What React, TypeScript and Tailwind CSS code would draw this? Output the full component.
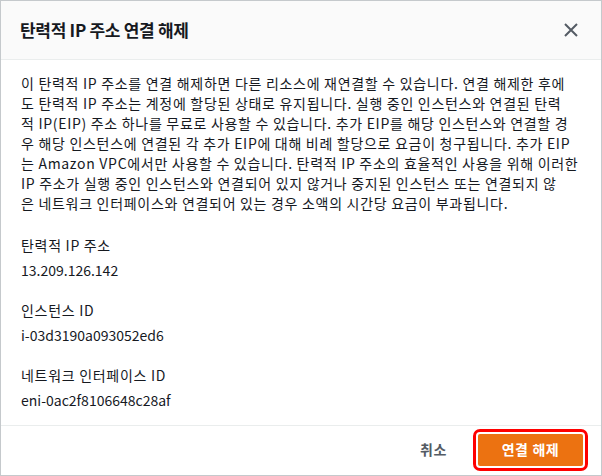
import React from "react";

const font = { fontFamily: '"Noto Sans CJK KR", "Noto Sans", sans-serif' };

const Field = ({ label, value }: { label: string; value: string }) => (
  <div className="flex flex-col gap-[5px]">
    <div className="leading-5 tracking-[0.7px]">{label}</div>
    <div className="leading-5">{value}</div>
  </div>
);

const App = () => {
  return (
    <div
      className="w-[602px] h-[476px] bg-white border border-[#c5c9cc] flex flex-col text-[#16191f] text-[14px]"
      style={font}
    >
      <div className="h-[59px] shrink-0 bg-[#fafafa] border-b border-[#eaeded] flex items-center justify-between pl-[19px] pr-[22px]">
        <h1 className="text-[17px] tracking-[-0.3px] font-bold leading-6">탄력적 IP 주소 연결 해제</h1>
        <button className="w-4 h-4 flex items-center justify-center text-[#545b64]">
          <svg width="16" height="16" viewBox="0 0 16 16" fill="none">
            <path d="M2 2l12 12M14 2L2 14" stroke="currentColor" strokeWidth="2" />
          </svg>
        </button>
      </div>

      <div className="flex-1 px-5 pt-[13px] flex flex-col">
        <p className="leading-5 tracking-[0.7px]">
          이 탄력적 IP 주소를 연결 해제하면 다른 리소스에 재연결할 수 있습니다. 연결 해제한 후에
          <br />
          도 탄력적 IP 주소는 계정에 할당된 상태로 유지됩니다. 실행 중인 인스턴스와 연결된 탄력
          <br />
          적 IP(EIP) 주소 하나를 무료로 사용할 수 있습니다. 추가 EIP를 해당 인스턴스와 연결할 경
          <br />
          우 해당 인스턴스에 연결된 각 추가 EIP에 대해 비례 할당으로 요금이 청구됩니다. 추가 EIP
          <br />
          는 Amazon VPC에서만 사용할 수 있습니다. 탄력적 IP 주소의 효율적인 사용을 위해 이러한
          <br />
          IP 주소가 실행 중인 인스턴스와 연결되어 있지 않거나 중지된 인스턴스 또는 연결되지 않
          <br />
          은 네트워크 인터페이스와 연결되어 있는 경우 소액의 시간당 요금이 부과됩니다.
        </p>
        <div className="mt-[22px] flex flex-col gap-5">
          <Field label="탄력적 IP 주소" value="13.209.126.142" />
          <Field label="인스턴스 ID" value="i-03d3190a093052ed6" />
          <Field label="네트워크 인터페이스 ID" value="eni-0ac2f8106648c28af" />
        </div>
      </div>

      <div className="h-[50px] shrink-0 border-t border-[#eaeded] flex items-center justify-end gap-[11px] pr-[18px] pb-[2px]">
        <button className="px-5 h-8 font-bold tracking-[0.6px] text-[#545b64]">취소</button>
        <button className="h-8 w-[105px] rounded-[2px] bg-[#ec7211] text-white font-bold tracking-[0.6px] outline-[3px] outline-solid outline-[#ff0000] outline-offset-[2px]">
          연결 해제
        </button>
      </div>
    </div>
  );
};

export default App;
